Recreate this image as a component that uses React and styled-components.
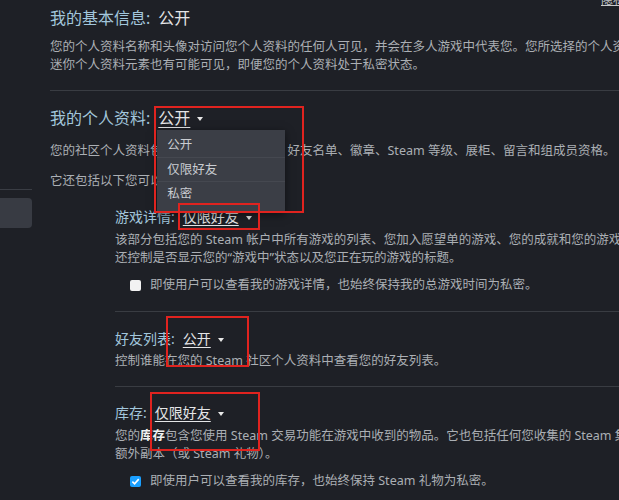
import React from 'react';
import styled, { createGlobalStyle } from 'styled-components';

const GlobalStyle = createGlobalStyle`
  body {
    margin: 0;
    background: #1e2026;
    font-family: "Noto Sans", "Noto Sans CJK SC", sans-serif;
    overflow: hidden;
  }
`;

const Page = styled.div`
  position: relative;
  display: flex;
  width: 619px;
  height: 500px;
  overflow: hidden;
  background: #1e2026;
`;

const Sidebar = styled.div`
  width: 32px;
  flex-shrink: 0;
  padding-top: 189px;
  display: flex;
  flex-direction: column;
`;

const SideRule = styled.div`
  height: 1px;
  background: #3a3d44;
`;

const SideTab = styled.div`
  margin-top: 8px;
  height: 30px;
  background: #383b43;
  border-radius: 0 4px 4px 0;
`;

const Main = styled.div`
  flex: 1;
  min-width: 0;
  padding: 7px 0 0 18px;
`;

const Heading = styled.div`
  display: flex;
  align-items: center;
  font-size: ${p => (p.$sub ? '14px' : '16px')};
  line-height: ${p => (p.$sub ? '20px' : '22px')};
  margin-top: ${p => p.$top || 0}px;
  white-space: nowrap;
`;

const Label = styled.span`
  color: #a2c6dc;
`;

const ValueWrap = styled.span`
  position: relative;
  display: inline-flex;
  align-items: center;
  margin-left: ${p => (p.$sub ? '8px' : '8px')};
`;

const Value = styled.span`
  color: #e4e5e7;
  text-decoration: ${p => (p.$plain ? 'none' : 'underline')};
  text-underline-offset: 3px;
  text-decoration-thickness: 1px;
`;

const Caret = styled.span`
  width: 0;
  height: 0;
  margin-left: 7px;
  margin-top: 2px;
  border-left: 3px solid transparent;
  border-right: 3px solid transparent;
  border-top: 4px solid #e8e8e8;
`;

const Desc = styled.p`
  margin: ${p => p.$top || 0}px 0 0;
  font-size: 12.5px;
  line-height: 18px;
  color: #abafb4;
  white-space: nowrap;
`;

const Strong = styled.span`
  color: #f0f0f0;
  font-weight: 700;
`;

const Divider = styled.div`
  height: 1px;
  background: #393c42;
  margin-top: ${p => p.$top || 0}px;
`;

const Sub = styled.div`
  padding-left: 65px;
`;

const SubBlock = styled.div`
  padding: ${p => p.$pt || 17}px 0 ${p => p.$pb || 0}px;
`;

const CheckRow = styled.label`
  display: flex;
  align-items: center;
  gap: 9px;
  margin-top: 9px;
  padding-left: 15px;
  font-size: 12.5px;
  line-height: 18px;
  color: #abafb4;
  white-space: nowrap;
`;

const Box = styled.span`
  width: 11px;
  height: 11px;
  border-radius: 2px;
  background: ${p => (p.$checked ? '#1a9fff' : '#f2f2f2')};
  display: flex;
  align-items: center;
  justify-content: center;
  flex-shrink: 0;
`;

const Menu = styled.div`
  position: absolute;
  top: 23px;
  left: -1px;
  width: 128px;
  padding: 3px 0 8px;
  background: #3b3e46;
  box-shadow: 0 2px 8px rgba(0, 0, 0, 0.5);
  z-index: 2;
`;

const MenuItem = styled.div`
  height: 24px;
  line-height: 24px;
  padding-left: 10px;
  font-size: 12.5px;
  color: #c9ccd1;
  border-top: ${p => (p.$first ? 'none' : '1px solid #454850')};
  box-sizing: border-box;
`;

const Marker = styled.span`
  position: absolute;
  left: ${p => p.$x}px;
  top: ${p => p.$y}px;
  width: ${p => p.$w}px;
  height: ${p => p.$h}px;
  border: 2px solid #e0231f;
  box-sizing: border-box;
  z-index: 3;
  pointer-events: none;
`;

const CornerLink = styled.span`
  position: absolute;
  top: -10px;
  right: -6px;
  font-size: 12px;
  color: #c8cacd;
  text-decoration: underline;
`;

const Check = () => (
  <svg width="9" height="9" viewBox="0 0 10 10">
    <path d="M1.5 5.2 L4 7.6 L8.6 2.4" fill="none" stroke="#fff" strokeWidth="1.8" />
  </svg>
);

const Setting = ({ label, value, sub, top, marker, children }) => (
  <Heading $sub={sub} $top={top}>
    <Label>{label}:</Label>
    <ValueWrap>
      <Value>{value}</Value>
      <Caret />
      {marker && <Marker $x={marker[0]} $y={marker[1]} $w={marker[2]} $h={marker[3]} />}
      {children}
    </ValueWrap>
  </Heading>
);

export default function App() {
  return (
    <Page>
      <GlobalStyle />
      <Sidebar>
        <SideRule />
        <SideTab />
      </Sidebar>
      <Main>
        <Heading>
          <Label>我的基本信息:</Label>
          <ValueWrap>
            <Value $plain>公开</Value>
          </ValueWrap>
        </Heading>
        <Desc $top={9}>
          您的个人资料名称和头像对访问您个人资料的任何人可见，并会在多人游戏中代表您。您所选择的个人资料边框和
          <br />
          迷你个人资料元素也有可能可见，即便您的个人资料处于私密状态。
        </Desc>
        <Divider $top={16} />

        <Setting label="我的个人资料" value="公开" top={16} marker={[-4, -1, 150, 107]}>
          <Menu>
            <MenuItem $first>公开</MenuItem>
            <MenuItem>仅限好友</MenuItem>
            <MenuItem>私密</MenuItem>
          </Menu>
        </Setting>
        <Desc $top={13}>
          您的社区个人资料包含您的个人资料摘要、好友名单、徽章、Steam 等级、展柜、留言和组成员资格。
        </Desc>
        <Desc $top={12}>它还包括以下您可以单独设置的内容：</Desc>

        <Sub>
          <SubBlock>
            <Setting label="游戏详情" value="仅限好友" sub marker={[-5, -4, 82, 27]} />
            <Desc $top={4}>
              该部分包括您的 Steam 帐户中所有游戏的列表、您加入愿望单的游戏、您的成就和您的游戏时间。此设置
              <br />
              还控制是否显示您的“游戏中”状态以及您正在玩的游戏的标题。
            </Desc>
            <CheckRow>
              <Box />
              即使用户可以查看我的游戏详情，也始终保持我的总游戏时间为私密。
            </CheckRow>
          </SubBlock>
          <Divider $top={17} />

          <SubBlock $pt={17}>
            <Setting label="好友列表" value="公开" sub marker={[-17, -13, 83, 51]} />
            <Desc $top={3}>控制谁能在您的 Steam 社区个人资料中查看您的好友列表。</Desc>
          </SubBlock>
          <Divider $top={16} />

          <SubBlock $pt={16}>
            <Setting label="库存" value="仅限好友" sub marker={[-5, -11, 110, 59]} />
            <Desc $top={4}>
              您的<Strong>库存</Strong>包含您使用 Steam 交易功能在游戏中收到的物品。它也包括任何您收集的 Steam 集换式卡牌，以及游戏的
              <br />
              额外副本（或 Steam 礼物）。
            </Desc>
            <CheckRow>
              <Box $checked>
                <Check />
              </Box>
              即使用户可以查看我的库存，也始终保持 Steam 礼物为私密。
            </CheckRow>
          </SubBlock>
        </Sub>
      </Main>
      <CornerLink>隐私</CornerLink>
    </Page>
  );
}
